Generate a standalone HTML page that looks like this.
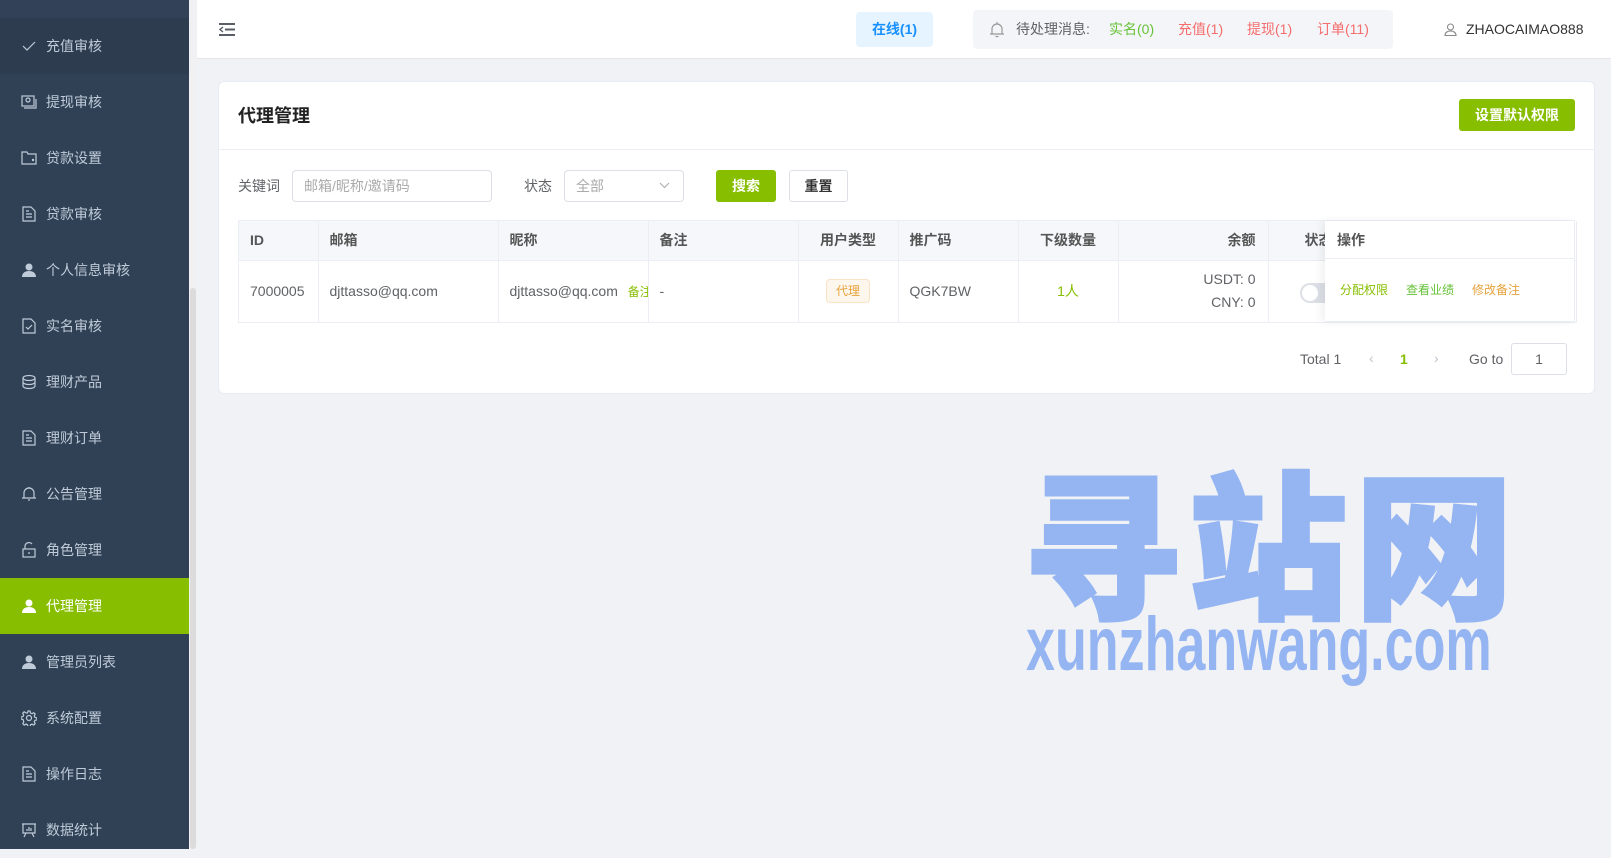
<!DOCTYPE html>
<html><head><meta charset="utf-8"><style>
*{box-sizing:border-box;margin:0;padding:0}
body{width:1611px;height:849px;overflow:hidden;background:#f0f2f5;font-family:"Liberation Sans","Noto Sans CJK SC",sans-serif;font-size:14px;color:#606266;position:relative}
.abs{position:absolute}
.side{left:0;top:0;width:189px;height:849px;background:#304156}
.scroll{left:189px;top:0;width:8px;height:849px;background:#f1f1f3}
.thumb{left:190px;top:288px;width:6px;height:561px;background:#dcdcdc;border-radius:3px}
.mi{position:absolute;left:0;width:189px;height:56px;color:#bfcbd9;font-size:14px;line-height:56px;padding-left:46px}
.mi svg{position:absolute;left:21px;top:20px}
.mi.on{background:#87be00;color:#fff}
.hdr{left:197px;top:0;width:1414px;height:59px;background:#fff;border-bottom:1px solid #e6e6e6}
.card{left:218px;top:81px;width:1377px;height:313px;background:#fff;border:1px solid #e6ebf5;border-radius:6px}
.btn{position:absolute;border-radius:3px;text-align:center;font-size:14px;font-weight:bold}
th,td{border-right:1px solid #ebeef5;border-bottom:1px solid #ebeef5}
</style></head><body>
<div class="abs side"></div>
<div class="abs" style="left:0;top:0;width:189px;height:18px;background:#324157"></div>
<div class="mi" style="top:18px;background:#2e3c50"><svg width="16" height="16" viewBox="0 0 16 16" fill="none" stroke="#bfcbd9" stroke-width="1.2"><path d="M2 8l4 4 8-8"/></svg>充值审核</div>
<div class="mi" style="top:74px"><svg width="16" height="16" viewBox="0 0 16 16" fill="none" stroke="#bfcbd9" stroke-width="1.2"><rect x="1" y="2" width="12" height="10"/><path d="M3 14h12V5"/><circle cx="7" cy="6" r="2"/></svg>提现审核</div>
<div class="mi" style="top:130px"><svg width="16" height="16" viewBox="0 0 16 16" fill="none" stroke="#bfcbd9" stroke-width="1.2"><path d="M1 2h5l1 2h8v10H1z"/><circle cx="12" cy="10" r=".6"/></svg>贷款设置</div>
<div class="mi" style="top:186px"><svg width="16" height="16" viewBox="0 0 16 16" fill="none" stroke="#bfcbd9" stroke-width="1.2"><path d="M2 1h8l4 4v10H2z M5 8h6M5 11h6M5 5h3"/></svg>贷款审核</div>
<div class="mi" style="top:242px"><svg width="16" height="16" viewBox="0 0 16 16" fill="#bfcbd9"><circle cx="8" cy="5" r="3.5"/><path d="M1 15c0-4 3-6 7-6s7 2 7 6z"/></svg>个人信息审核</div>
<div class="mi" style="top:298px"><svg width="16" height="16" viewBox="0 0 16 16" fill="none" stroke="#bfcbd9" stroke-width="1.2"><path d="M2 1h8l4 4v10H2z M5 9l2 2 4-4"/></svg>实名审核</div>
<div class="mi" style="top:354px"><svg width="16" height="16" viewBox="0 0 16 16" fill="none" stroke="#bfcbd9" stroke-width="1.2"><ellipse cx="8" cy="4" rx="6" ry="2.5"/><path d="M2 4v8c0 1.4 2.7 2.5 6 2.5s6-1.1 6-2.5V4M2 8c0 1.4 2.7 2.5 6 2.5S14 9.4 14 8"/></svg>理财产品</div>
<div class="mi" style="top:410px"><svg width="16" height="16" viewBox="0 0 16 16" fill="none" stroke="#bfcbd9" stroke-width="1.2"><path d="M2 1h8l4 4v10H2z M5 8h6M5 11h6M5 5h3"/></svg>理财订单</div>
<div class="mi" style="top:466px"><svg width="16" height="16" viewBox="0 0 16 16" fill="none" stroke="#bfcbd9" stroke-width="1.2"><path d="M3 12V7a5 5 0 0110 0v5M1 12h14M8 1v1M8 13v2"/></svg>公告管理</div>
<div class="mi" style="top:522px"><svg width="16" height="16" viewBox="0 0 16 16" fill="none" stroke="#bfcbd9" stroke-width="1.2"><rect x="2" y="7" width="12" height="8"/><path d="M4 7V4a4 4 0 017-2M8 10v2"/></svg>角色管理</div>
<div class="mi on" style="top:578px"><svg width="16" height="16" viewBox="0 0 16 16" fill="#fff"><circle cx="8" cy="5" r="3.5"/><path d="M1 15c0-4 3-6 7-6s7 2 7 6z"/></svg>代理管理</div>
<div class="mi" style="top:634px"><svg width="16" height="16" viewBox="0 0 16 16" fill="#bfcbd9"><circle cx="8" cy="5" r="3.5"/><path d="M1 15c0-4 3-6 7-6s7 2 7 6z"/></svg>管理员列表</div>
<div class="mi" style="top:690px"><svg width="16" height="16" viewBox="0 0 16 16" fill="none" stroke="#bfcbd9" stroke-width="1.2"><circle cx="8" cy="8" r="2.5"/><path d="M7 1h2l.5 2 1.5.7 1.8-1 1.4 1.4-1 1.8.7 1.5 2 .5v2l-2 .5-.7 1.5 1 1.8-1.4 1.4-1.8-1-1.5.7-.5 2H7l-.5-2-1.5-.7-1.8 1-1.4-1.4 1-1.8L2.1 9.5 0 9V7l2-.5.7-1.5-1-1.8 1.4-1.4 1.8 1L6.5 3z"/></svg>系统配置</div>
<div class="mi" style="top:746px"><svg width="16" height="16" viewBox="0 0 16 16" fill="none" stroke="#bfcbd9" stroke-width="1.2"><path d="M2 1h8l4 4v10H2z M5 8h6M5 11h6M5 5h3"/></svg>操作日志</div>
<div class="mi" style="top:802px"><svg width="16" height="16" viewBox="0 0 16 16" fill="none" stroke="#bfcbd9" stroke-width="1.2"><path d="M1 2h14M2 2v9h12V2M5 11l-2 4M11 11l2 4M6 9V7M8 9V5M10 9V6"/></svg>数据统计</div>
<div class="abs scroll"></div><div class="abs thumb"></div>

<div class="abs hdr"></div>
<svg class="abs" style="left:219px;top:23px" width="16" height="13" viewBox="0 0 16 13" fill="none" stroke="#5a5e66" stroke-width="2"><path d="M0 1h16M6 6.5h10M0 12h16"/><path d="M4 4L1 6.5 4 9" stroke-width="1.4"/></svg>
<div class="abs" style="left:856px;top:12px;width:77px;height:35px;background:#e6f4ff;border-radius:4px;color:#1890ff;font-weight:bold;line-height:35px;text-align:center">在线(1)</div>
<div class="abs" style="left:973px;top:10px;width:420px;height:39px;background:#f4f5f8;border-radius:4px;line-height:39px;font-size:14px">
<svg class="abs" style="left:16px;top:11px" width="16" height="18" viewBox="0 0 16 18" fill="none" stroke="#999" stroke-width="1.2"><path d="M3 13V8a5 5 0 0110 0v5M1 13h14M8 1v2M6.5 15.5h3"/></svg>
<span class="abs" style="left:43px;color:#606266">待处理消息:</span>
<span class="abs" style="left:136px;color:#67c23a">实名(0)</span>
<span class="abs" style="left:205px;color:#f56c6c">充值(1)</span>
<span class="abs" style="left:274px;color:#f56c6c">提现(1)</span>
<span class="abs" style="left:344px;color:#f56c6c">订单(11)</span>
</div>
<svg class="abs" style="left:1444px;top:23px" width="13" height="13" viewBox="0 0 13 13" fill="none" stroke="#888" stroke-width="1.1"><circle cx="6.5" cy="4" r="3"/><path d="M1 12.5c0-3 2.5-4.5 5.5-4.5S12 9.5 12 12.5z"/></svg>
<div class="abs" style="left:1466px;top:20px;color:#333;font-size:14px;line-height:19px">ZHAOCAIMAO888</div>

<div class="abs card"></div>
<div class="abs" style="left:238px;top:104px;font-size:18px;font-weight:bold;color:#222;line-height:24px">代理管理</div>
<div class="btn" style="left:1459px;top:99px;width:116px;height:32px;background:#87be00;color:#fff;line-height:32px">设置默认权限</div>
<div class="abs" style="left:219px;top:149px;width:1375px;height:1px;background:#ebeef5"></div>
<div class="abs" style="left:238px;top:177px;line-height:18px;color:#606266">关键词</div>
<div class="abs" style="left:292px;top:170px;width:200px;height:32px;border:1px solid #dcdfe6;border-radius:4px;color:#aaa;line-height:30px;padding-left:11px">邮箱/昵称/邀请码</div>
<div class="abs" style="left:524px;top:177px;line-height:18px;color:#606266">状态</div>
<div class="abs" style="left:564px;top:170px;width:120px;height:32px;border:1px solid #dcdfe6;border-radius:4px;color:#aaa;line-height:30px;padding-left:11px">全部
<svg class="abs" style="left:94px;top:11px" width="11" height="7" viewBox="0 0 11 7" fill="none" stroke="#aaa" stroke-width="1"><path d="M1 1l4.5 4.5L10 1"/></svg></div>
<div class="btn" style="left:716px;top:170px;width:60px;height:32px;background:#87be00;color:#fff;line-height:32px">搜索</div>
<div class="btn" style="left:789px;top:170px;width:59px;height:32px;border:1px solid #dcdfe6;color:#333;line-height:30px;background:#fff">重置</div>

<div class="abs" style="left:238px;top:220px;width:1337px;height:103px;border-top:1px solid #ebeef5;border-left:1px solid #ebeef5">
<table style="border-collapse:collapse;table-layout:fixed;width:1337px;font-size:14px">
<colgroup><col style="width:79px"><col style="width:180px"><col style="width:150px"><col style="width:150px"><col style="width:100px"><col style="width:120px"><col style="width:100px"><col style="width:150px"><col style="width:58px"><col style="width:250px"></colgroup>
<tr style="height:39px;background:#f5f7fa;color:#555;font-weight:bold;text-align:left">
<th style="padding-left:11px">ID</th><th style="padding-left:11px">邮箱</th><th style="padding-left:11px">昵称</th><th style="padding-left:11px">备注</th><th style="text-align:center">用户类型</th><th style="padding-left:11px">推广码</th><th style="text-align:center">下级数量</th><th style="text-align:right;padding-right:12px">余额</th><th style="text-align:right;white-space:nowrap;overflow:hidden;padding-left:36px">状态</th><th style="background:#fff"></th></tr>
<tr style="height:62px;color:#606266">
<td style="padding-left:11px">7000005</td><td style="padding-left:11px">djttasso@qq.com</td><td style="padding-left:11px;white-space:nowrap;overflow:hidden">djttasso@qq.com <span style="color:#87be00;font-size:12px;margin-left:6px">备注</span></td><td style="padding-left:11px">-</td>
<td style="text-align:center"><span style="display:inline-block;border:1px solid #fae3c6;background:#fdf6ec;color:#e6a23c;font-size:12px;border-radius:4px;padding:0 9px;line-height:22px">代理</span></td>
<td style="padding-left:11px">QGK7BW</td><td style="text-align:center;color:#87be00">1人</td>
<td style="text-align:right;padding-right:12px;line-height:23px">USDT: 0<br>CNY: 0</td>
<td style="position:relative"><span style="position:absolute;left:31px;top:22px;width:40px;height:20px;border-radius:10px;background:#dcdfe6"><span style="position:absolute;left:2px;top:2px;width:16px;height:16px;border-radius:8px;background:#fff"></span></span></td><td></td></tr>
</table>
</div>
<div class="abs" style="left:1325px;top:221px;width:250px;height:101px;background:#fff;box-shadow:-4px 0 8px rgba(0,0,0,.06);border-right:1px solid #ebeef5;border-bottom:1px solid #ebeef5">
<div style="height:38px;border-bottom:1px solid #ebeef5;font-weight:bold;color:#555;line-height:38px;padding-left:12px">操作</div>
<div style="position:relative;height:62px;font-size:12px;line-height:62px">
<span class="abs" style="left:15px;color:#87be00">分配权限</span><span class="abs" style="left:81px;color:#67c23a">查看业绩</span><span class="abs" style="left:147px;color:#e6a23c">修改备注</span></div></div>

<div class="abs" style="left:1300px;top:350px;color:#606266;line-height:18px">Total 1</div>
<div class="abs" style="left:1369px;top:349px;color:#c0c4cc;line-height:18px">‹</div>
<div class="abs" style="left:1400px;top:350px;color:#87be00;font-weight:bold;line-height:18px">1</div>
<div class="abs" style="left:1434px;top:349px;color:#c0c4cc;line-height:18px">›</div>
<div class="abs" style="left:1469px;top:350px;color:#606266;line-height:18px">Go to</div>
<div class="abs" style="left:1511px;top:343px;width:56px;height:32px;border:1px solid #dcdfe6;border-radius:3px;text-align:center;line-height:30px;color:#606266">1</div>

<div class="abs" style="left:1023px;top:448px;width:480px;font-family:'Noto Sans CJK SC',sans-serif;font-weight:900;font-size:158px;line-height:180px;color:#94b4f2;letter-spacing:8px;white-space:nowrap;-webkit-text-stroke:4px #94b4f2">寻站网</div>
<div class="abs" style="left:1026px;top:600px;font-family:'Liberation Sans',sans-serif;font-weight:bold;font-size:76px;line-height:90px;color:#94b4f2;white-space:nowrap;transform:scaleX(.685);transform-origin:0 0">xunzhanwang.com</div>
</body></html>
